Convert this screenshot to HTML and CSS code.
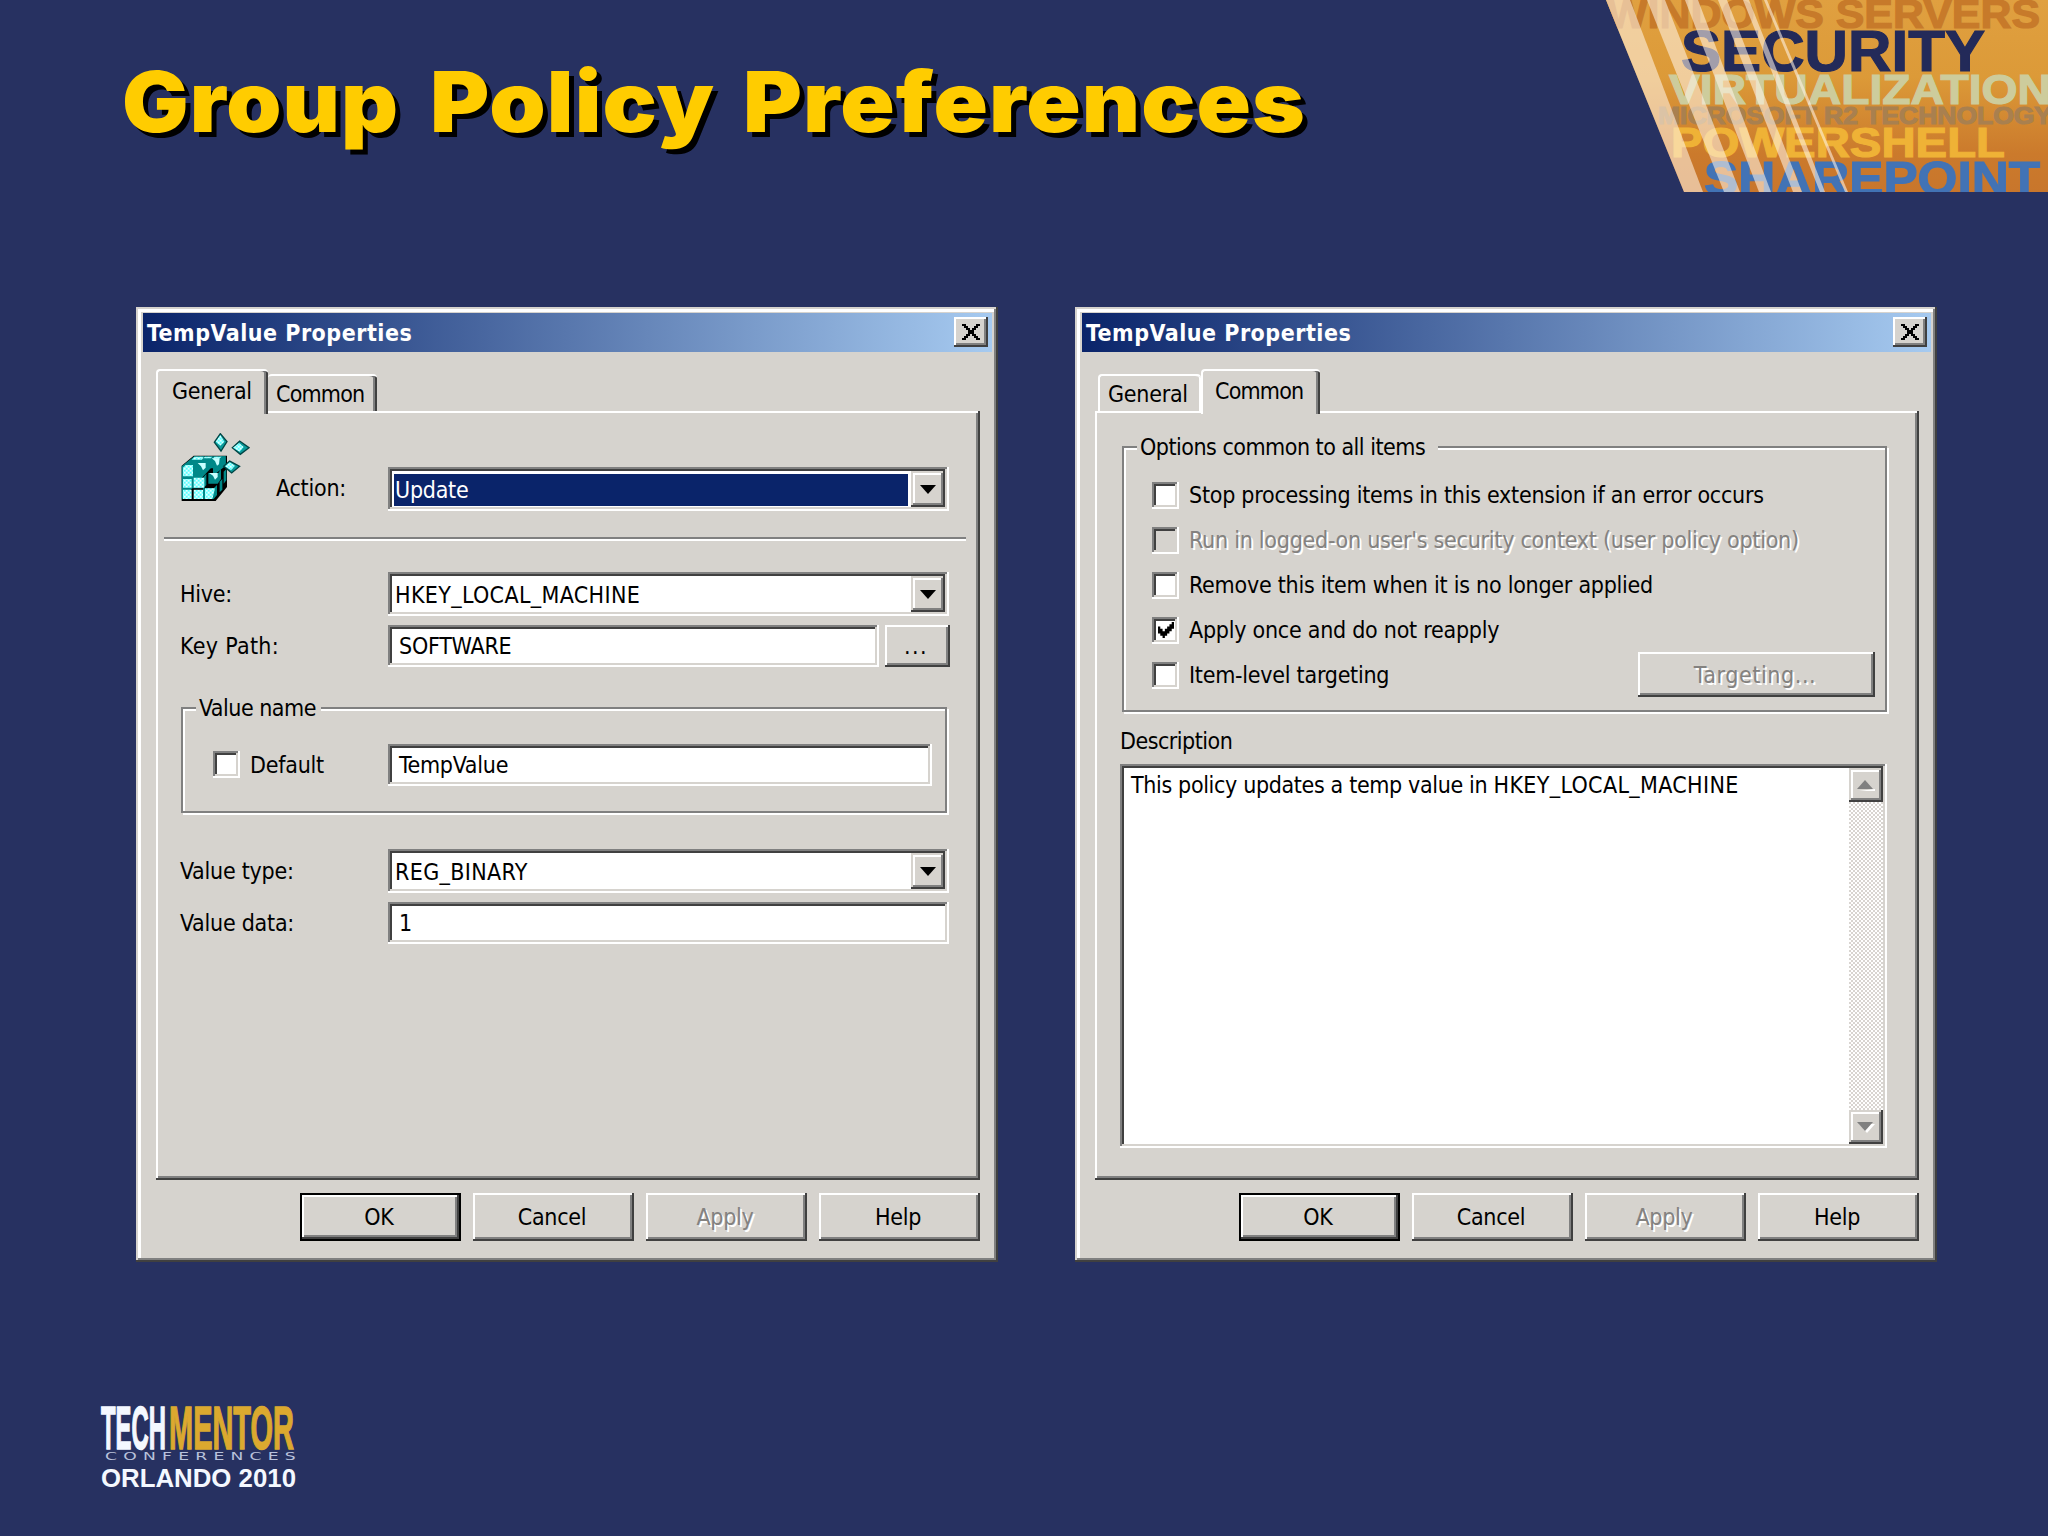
FILE: index.html
```
<!DOCTYPE html>
<html lang="en">
<head>
    <meta charset="UTF-8">
    <meta name="viewport" content="width=device-width, initial-scale=1.0">
    <title>Group Policy Preferences</title>
    <link rel="stylesheet" href="styles.css">
</head>
<body>
    <header class="header">
        <h1>
            <svg class="title" width="1240" height="120" viewBox="0 0 1240 120">
                <text x="22" y="92" textLength="277" lengthAdjust="spacingAndGlyphs">Group</text>
                <text x="330" y="92" textLength="285" lengthAdjust="spacingAndGlyphs">Policy</text>
                <text x="643" y="92" textLength="563" lengthAdjust="spacingAndGlyphs">Preferences</text>
            </svg>
        </h1>
        <svg class="banner" width="458" height="192" viewBox="0 0 458 192">
            <defs>
                <linearGradient id="sky" x1="0" y1="0" x2="0" y2="1">
                    <stop offset="0" stop-color="#e0a040"/>
                    <stop offset="0.4" stop-color="#dc9a38"/>
                    <stop offset="0.8" stop-color="#cb7a2c"/>
                    <stop offset="1" stop-color="#c8762c"/>
                </linearGradient>
                <clipPath id="edge"><polygon points="16,0 94,192 458,192 458,0"/></clipPath>
            </defs>
            <g clip-path="url(#edge)">
                <rect width="458" height="192" fill="url(#sky)"/>
                <g class="words">
                    <text x="17" y="28" font-size="41" fill="#c77a2a" stroke="#c77a2a" textLength="433" lengthAdjust="spacingAndGlyphs">WINDOWS SERVERS</text>
                    <text x="91" y="71" font-size="58" fill="#232a59" stroke="#232a59" textLength="304" lengthAdjust="spacingAndGlyphs">SECURITY</text>
                    <text x="79" y="104" font-size="43" fill="#cdcc9c" stroke="#cdcc9c" textLength="382" lengthAdjust="spacingAndGlyphs">VIRTUALIZATION</text>
                    <text x="68" y="124" font-size="24" fill="#a9804f" stroke="#a9804f" textLength="394" lengthAdjust="spacingAndGlyphs">MICROSOFT R2 TECHNOLOGY</text>
                    <text x="81" y="157" font-size="43" fill="#efb236" stroke="#efb236" textLength="334" lengthAdjust="spacingAndGlyphs">POWERSHELL</text>
                    <text x="114" y="195" font-size="49" fill="#4273b5" stroke="#4273b5" textLength="336" lengthAdjust="spacingAndGlyphs">SHAREPOINT</text>
                </g>
                <g fill="#fff3e6" fill-opacity="0.58">
                    <polygon points="14,0 40,0 113,192 92,192"/>
                    <polygon points="57,0 75,0 150,192 134,192"/>
                    <polygon points="95,0 108,0 181,192 169,192"/>
                    <polygon points="128,0 137,0 212,192 203,192"/>
                    <polygon points="153,0 159,0 235,192 230,192"/>
                    <polygon points="174,0 177,0 258,192 255,192"/>
                </g>
            </g>
        </svg>
    </header>

    <main class="dialogs">
        <section class="dialog">
            <div class="titlebar">
                <span>TempValue Properties</span>
                <div class="close"><svg width="18" height="16" viewBox="0 0 9 8"><path d="M0 0h2v1h1v1h1v1h1V2h1V1h1V0h2v1H8v1H7v1H6v2h1v1h1v1h1v1H7V7H6V6H5V5H4v1H3v1H2v1H0V7h1V6h1V5h1V3H2V2H1V1H0z"/></svg></div>
            </div>
            <div class="tabs">
                <div class="tab active tab-general">General</div>
                <div class="tab tab-common">Common</div>
            </div>
            <div class="panel">
                <div class="row row-action">
                    <svg class="reg-icon" width="69" height="69" viewBox="34 22 207 207">
                        <defs>
                            <pattern id="dither" width="12" height="12" patternUnits="userSpaceOnUse">
                                <rect width="12" height="12" fill="#5ff"/>
                                <path d="M0 0h6v6H0zM6 6h6v6H6z" fill="#e4ffff"/>
                            </pattern>
                        </defs>
                        <path d="M36 226V120L72 90H172V184L138 226z" fill="#000"/>
                        <path d="M36 222V122L74 92H168V120L130 150V120z" fill="#088"/>
                        <g fill="#088">
                            <path d="M80 112h28l12-12v26l-12 14H80zM116 98h28l10-6h14v26l-14 10h-38z"/>
                            <path d="M116 142h30l8-12v30l-10 14h-28z"/>
                            <path d="M66 156h34l10-12v34l-8 10H66zM100 188h32l10-10v30l-10 12h-32z"/>
                            <path d="M150 168l8-8v32l-8 8zM162 138l8-8v34l-8 10z"/>
                        </g>
                        <g fill="url(#dither)">
                            <path d="M40 126l8-8h22v34H40zM40 160h26v26H40zM40 192h26v28H40zM72 156h32v30H72zM72 192h28v28H72zM106 188h30l-8 32h-22z"/>
                            <path d="M74 93h28l-5 9H66zM106 93h22l-5 5h-22zM134 93h22l-8 6h-18z"/>
                        </g>
                        <path d="M84 112h24v14l-8 8-6-12zM126 98h24l-2 18-6 4-6-14zM118 142h26v12l-8 8-6-12z" fill="#c8ffff"/>
                        <g stroke-width="4" stroke="#044">
                            <path d="M152 24l20 24-18 28-20-26zM238 66l-26 20-24-20 22-20zM210 122l-24 20-24-20 18-16z" fill="#0a9a9a"/>
                        </g>
                        <path d="M152 28l12 20-12 12-14-12zM222 64l-12 14-20-12 18-14zM196 120l-12 14-18-12 14-12z" fill="url(#dither)"/>
                    </svg>
                    <label class="label-action">Action:</label>
                    <div class="field combo combo-focus"><span class="value">Update</span><i class="drop"></i></div>
                </div>
                <div class="rule"></div>
                <div class="row row-hive">
                    <label>Hive:</label>
                    <div class="field combo"><span class="value caps">HKEY_LOCAL_MACHINE</span><i class="drop"></i></div>
                </div>
                <div class="row row-key">
                    <label class="label-key">Key Path:</label>
                    <div class="field input"><span class="value">SOFTWARE</span></div>
                    <div class="button browse">...</div>
                </div>
                <div class="group group-name">
                    <div class="legend">Value name</div>
                    <i class="check"></i>
                    <label class="label-default">Default</label>
                    <div class="field input"><span class="value">TempValue</span></div>
                </div>
                <div class="row row-type">
                    <label>Value type:</label>
                    <div class="field combo"><span class="value caps">REG_BINARY</span><i class="drop"></i></div>
                </div>
                <div class="row row-data">
                    <label>Value data:</label>
                    <div class="field input"><span class="value">1</span></div>
                </div>
            </div>
            <div class="buttons">
                <div class="button default">OK</div>
                <div class="button">Cancel</div>
                <div class="button disabled">Apply</div>
                <div class="button">Help</div>
            </div>
        </section>

        <section class="dialog dialog-common">
            <div class="titlebar">
                <span>TempValue Properties</span>
                <div class="close"><svg width="18" height="16" viewBox="0 0 9 8"><path d="M0 0h2v1h1v1h1v1h1V2h1V1h1V0h2v1H8v1H7v1H6v2h1v1h1v1h1v1H7V7H6V6H5V5H4v1H3v1H2v1H0V7h1V6h1V5h1V3H2V2H1V1H0z"/></svg></div>
            </div>
            <div class="tabs">
                <div class="tab tab-general">General</div>
                <div class="tab active tab-common">Common</div>
            </div>
            <div class="panel">
                <div class="group group-options">
                    <div class="legend">Options common to all items</div>
                    <div class="option"><i class="check"></i><span>Stop processing items in this extension if an error occurs</span></div>
                    <div class="option disabled"><i class="check"></i><span>Run in logged-on user's security context (user policy option)</span></div>
                    <div class="option"><i class="check"></i><span>Remove this item when it is no longer applied</span></div>
                    <div class="option"><i class="check"><svg width="16" height="16" viewBox="0 0 7 7"><path d="M0 2h1v1h1v1h1V3h1V2h1V1h1V0h1v3H6v1H5v1H4v1H3v1H2V6H1V5H0z"/></svg></i><span>Apply once and do not reapply</span></div>
                    <div class="option"><i class="check"></i><span>Item-level targeting</span></div>
                    <div class="button disabled targeting">Targeting...</div>
                </div>
                <div class="desc-label">Description</div>
                <div class="field textarea">
                    <p>This policy updates a temp value in <span class="caps">HKEY_LOCAL_MACHINE</span></p>
                    <div class="scrollbar">
                        <i class="scroll-btn"><svg width="18" height="11" viewBox="0 0 18 11"><path d="M2 11h16v-2z" fill="#fff"/><path d="M0 9h16L8 0z" fill="#808080"/></svg></i>
                        <i class="scroll-btn"><svg width="18" height="11" viewBox="0 0 18 11"><path d="M2 2h16l-8 9z" fill="#fff"/><path d="M0 0h16L8 9z" fill="#808080"/></svg></i>
                    </div>
                </div>
            </div>
            <div class="buttons">
                <div class="button default">OK</div>
                <div class="button">Cancel</div>
                <div class="button disabled">Apply</div>
                <div class="button">Help</div>
            </div>
        </section>
    </main>

    <footer class="footer">
        <svg width="220" height="100" viewBox="0 0 220 100">
            <text class="brand" x="1" y="49" fill="#f4f8ff" stroke="#f4f8ff" textLength="65" lengthAdjust="spacingAndGlyphs">TECH</text>
            <text class="brand" x="69" y="49" fill="#dba92f" stroke="#dba92f" textLength="125" lengthAdjust="spacingAndGlyphs">MENTOR</text>
            <text class="brand-sub" x="5" y="60" textLength="197" lengthAdjust="spacingAndGlyphs">CONFERENCES</text>
            <text class="brand-city" x="1" y="87" textLength="195" lengthAdjust="spacingAndGlyphs">ORLANDO 2010</text>
        </svg>
    </footer>
</body>
</html>
```
FILE: styles.css
```
* {
    box-sizing: border-box;
}
body {
    margin: 0;
    width: 2048px;
    height: 1536px;
    overflow: hidden;
    background-color: #273161;
    color: #000;
    font-family: "DejaVu Sans Condensed", "DejaVu Sans", sans-serif;
    font-size: 23px;
    line-height: 28px;
    letter-spacing: -0.25px;
    white-space: nowrap;
}
svg {
    display: block;
}
i {
    display: block;
    flex: none;
}

/* slide header */
.header {
    display: flex;
    justify-content: space-between;
    height: 307px;
    padding-left: 100px;
}
h1 {
    margin: 40px 0 0;
}
.title {
    font: 900 84px Inter, sans-serif;
    letter-spacing: 1px;
    fill: #ffcc00;
    filter: drop-shadow(5px 5px 0 #000);
}
.words {
    font-family: "Liberation Sans", Arial, sans-serif;
    font-weight: bold;
    letter-spacing: 0;
    stroke-width: 1.2px;
}

/* dialogs */
.dialogs {
    display: flex;
    gap: 77px;
    padding-left: 136px;
}
.dialog {
    width: 862px;
    height: 955px;
    padding: 6px 6px 0 7px;
    background: #d6d3ce;
    box-shadow: inset -2px -2px #404040, inset 2px 2px #d6d3ce, inset -4px -4px #808080, inset 5px 5px #fff;
}
.titlebar {
    display: flex;
    justify-content: space-between;
    align-items: center;
    height: 39px;
    padding: 0 4px 0 4px;
    background: linear-gradient(to right, #0a246a, #a6caf0);
    color: #fff;
    font-weight: bold;
    letter-spacing: 0.5px;
}
.close {
    display: flex;
    justify-content: center;
    align-items: center;
    width: 34px;
    height: 30px;
    margin-top: -1px;
    background: #d6d3ce;
    box-shadow: inset -2px -2px #404040, inset 2px 2px #fff, inset -4px -4px #808080;
}
.tabs {
    display: flex;
    align-items: flex-end;
    height: 59px;
    padding-left: 13px;
}
.tab {
    height: 37px;
    padding: 4px 0 0 8px;
    border-top: 2px solid #fff;
    box-shadow: inset -2px 0 #404040, inset -4px 0 #808080;
    border-radius: 4px 4px 0 0;
}
.tab-common {
    width: 109px;
    letter-spacing: -0.8px;
}
.tab.active {
    height: 45px;
    margin-bottom: -3px;
    padding: 6px 0 0 14px;
    border-left: 2px solid #fff;
    background: #d6d3ce;
    position: relative;
}
.tab-general.active {
    width: 112px;
}
.dialog-common .tab-general {
    width: 103px;
    margin-left: 3px;
    border-left: 2px solid #fff;
    box-shadow: inset -2px 0 #fff;
}
.dialog-common .tab-common {
    width: 119px;
    padding-left: 12px;
}
.panel {
    width: 824px;
    height: 769px;
    margin-left: 13px;
    padding: 3px 0 0 8px;
    box-shadow: inset -2px -2px #404040, inset 2px 2px #fff, inset -4px -4px #808080;
}

/* fields */
.row {
    display: flex;
    align-items: center;
    height: 44px;
    padding-left: 16px;
}
.row label {
    width: 208px;
}
.row .label-key {
    letter-spacing: 0.3px;
}
.field {
    display: flex;
    align-items: center;
    width: 561px;
    height: 44px;
    padding: 4px;
    background: #fff;
    box-shadow: inset -2px -2px #fff, inset 2px 2px #808080, inset -4px -4px #d6d3ce, inset 4px 4px #404040;
}
.input {
    height: 42px;
    padding-left: 11px;
}
.combo {
    justify-content: space-between;
}
.combo .value {
    flex: 1;
    padding: 2px 0 0 3px;
}
.combo-focus .value {
    height: 32px;
    margin: 1px 3px 0 2px;
    padding: 2px 0 0 1px;
    background: #0a246a;
    color: #fff;
}
.caps {
    letter-spacing: 0.35px;
}
.drop {
    display: flex;
    justify-content: center;
    align-items: center;
    width: 34px;
    height: 36px;
    background: #d6d3ce;
    box-shadow: inset -2px -2px #404040, inset 2px 2px #d6d3ce, inset -4px -4px #808080, inset 4px 4px #fff;
}
.drop::after {
    content: "";
    border: 8px solid transparent;
    border-top: 9px solid #000;
    border-bottom: 0;
}
.row-action {
    align-items: flex-start;
    height: 88px;
    margin-top: 9px;
    padding-left: 17px;
}
.reg-icon {
    margin: 10px 26px 0 0;
}
.row .label-action {
    width: 112px;
    margin-top: 51px;
}
.row-action .field {
    margin-top: 44px;
}
.rule {
    width: 802px;
    height: 4px;
    margin-top: 26px;
    border-top: 2px solid #808080;
    border-bottom: 2px solid #fff;
}
.row-hive {
    margin-top: 31px;
}
.row-key {
    height: 42px;
    margin-top: 9px;
}
.row-key .input {
    width: 491px;
    margin-right: 6px;
}
.row-type {
    margin-top: 36px;
}
.row-data {
    height: 42px;
    margin-top: 9px;
}

/* etched group boxes */
.group {
    position: relative;
    margin-left: 17px;
    border: 2px solid #808080;
    box-shadow: 2px 2px #fff, inset 2px 2px #fff;
}
.legend {
    position: absolute;
    top: -15px;
    left: 13px;
    padding: 0 5px 0 3px;
    background: #d6d3ce;
    letter-spacing: -0.5px;
}
.group-name {
    display: flex;
    align-items: center;
    width: 766px;
    height: 106px;
    margin-top: 40px;
    padding: 9px 0 0 30px;
}
.group-name .check {
    margin-right: 10px;
}
.label-default {
    width: 138px;
}
.group-name .input {
    width: 544px;
}
.check {
    display: flex;
    justify-content: center;
    align-items: center;
    width: 27px;
    height: 27px;
    background: #fff;
    box-shadow: inset -2px -2px #fff, inset 2px 2px #808080, inset -4px -4px #d6d3ce, inset 4px 4px #404040;
}
.group-options {
    width: 765px;
    height: 266px;
    margin: 32px 0 0 19px;
    padding: 30px 0 0 28px;
}
.group-options .legend {
    padding-right: 13px;
}
.option {
    display: flex;
    align-items: center;
    gap: 10px;
    height: 34px;
    margin-bottom: 11px;
}
.disabled {
    color: #848280;
    text-shadow: 2px 2px #fff;
}
.disabled .check {
    background: #d6d3ce;
}

/* buttons */
.button {
    display: flex;
    justify-content: center;
    align-items: center;
    width: 161px;
    height: 48px;
    padding-right: 3px;
    box-shadow: inset -2px -2px #404040, inset 2px 2px #fff, inset -4px -4px #808080;
}
.button.default {
    box-shadow: inset 0 0 0 2px #000, inset -4px -4px #404040, inset 4px 4px #fff, inset -6px -6px #808080;
}
.browse {
    width: 65px;
    height: 42px;
    letter-spacing: 1.5px;
}
.targeting {
    position: absolute;
    top: 204px;
    left: 514px;
    width: 237px;
    height: 45px;
    letter-spacing: 0.6px;
}
.buttons {
    display: flex;
    gap: 12px;
    margin: 13px 0 0 157px;
}

/* description */
.desc-label {
    margin: 15px 0 0 17px;
    letter-spacing: -0.5px;
}
.textarea {
    align-items: stretch;
    justify-content: space-between;
    width: 767px;
    height: 384px;
    margin: 9px 0 0 17px;
}
.textarea p {
    margin: 3px 0 0 7px;
    letter-spacing: -0.35px;
}
.scrollbar {
    display: flex;
    flex-direction: column;
    justify-content: space-between;
    width: 34px;
    background: repeating-conic-gradient(#d8d4d0 0 25%, #fff 0 50%) 0 0 / 4px 4px;
}
.scroll-btn {
    display: flex;
    justify-content: center;
    align-items: center;
    height: 34px;
    background: #d6d3ce;
    box-shadow: inset -2px -2px #404040, inset 2px 2px #d6d3ce, inset -4px -4px #808080, inset 4px 4px #fff;
}

/* logo */
.footer {
    padding: 138px 0 0 100px;
}
.brand {
    font: bold 62px "Liberation Sans", Arial, sans-serif;
    letter-spacing: 0;
    stroke-width: 1.6px;
}
.brand-sub {
    font: 11px "DejaVu Sans", sans-serif;
    letter-spacing: 4px;
    fill: #b9c2dc;
}
.brand-city {
    font: bold 25px "Liberation Sans", Arial, sans-serif;
    letter-spacing: 0;
    fill: #f4f8ff;
}
```
